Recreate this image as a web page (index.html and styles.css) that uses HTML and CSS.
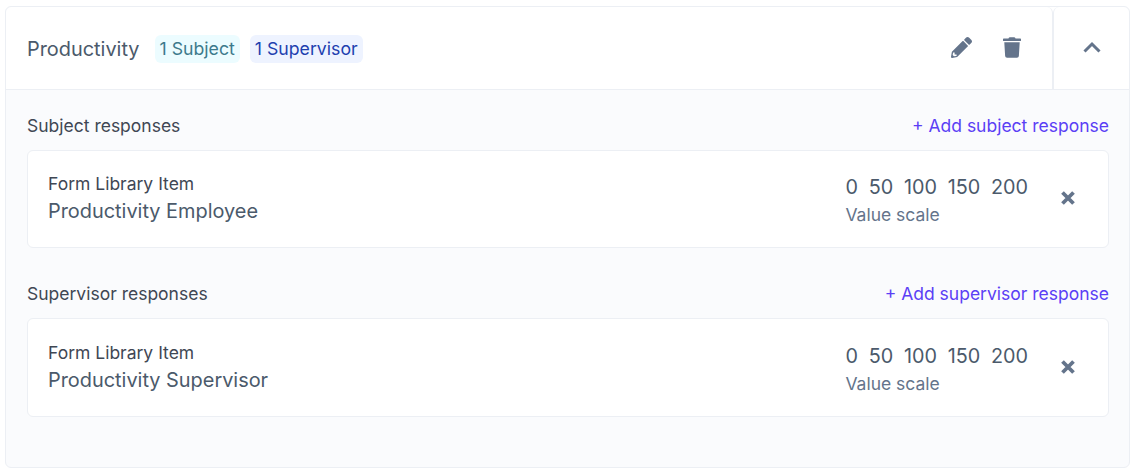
FILE: index.html
```html
<!DOCTYPE html>
<html lang="en">
<head>
    <meta charset="UTF-8">
    <meta name="viewport" content="width=device-width, initial-scale=1.0">
    <title>Productivity</title>
    <link rel="stylesheet" href="styles.css">
</head>
<body>
    <div class="card">
        <div class="card-header">
            <div class="header-main">
                <span class="title">Productivity</span>
                <span class="badge badge-subject">1 Subject</span>
                <span class="badge badge-supervisor">1 Supervisor</span>
                <div class="header-actions">
                    <svg class="icon" width="21" height="21" viewBox="0 0 512 512"><path d="M497.900 142.100l-46.100 46.100c-4.700 4.700-12.300 4.700-17 0l-111-111c-4.700-4.700-4.700-12.300 0-17l46.100-46.100c18.700-18.700 49.100-18.700 67.900 0l60.100 60.100c18.800 18.700 18.800 49.100 0 67.900zM284.200 99.800L21.600 362.400.4 483.900c-2.900 16.400 11.400 30.600 27.800 27.800l121.500-21.300 262.600-262.600c4.700-4.700 4.700-12.300 0-17l-111-111c-4.800-4.700-12.400-4.700-17.100 0zM88 424h48v36.300l-64.500 11.300-31.100-31.100L51.700 376H88v48z"/></svg>
                    <svg class="icon" width="18" height="21" viewBox="0 0 448 512"><path d="M432 32H312l-9.400-18.700A24 24 0 0 0 281.100 0H166.800a23.720 23.720 0 0 0-21.400 13.300L136 32H16A16 16 0 0 0 0 48v32a16 16 0 0 0 16 16h416a16 16 0 0 0 16-16V48a16 16 0 0 0-16-16zM53.200 467a48 48 0 0 0 47.900 45h245.800a48 48 0 0 0 47.900-45L416 128H32z"/></svg>
                </div>
            </div>
            <div class="header-toggle">
                <svg class="icon" width="20" height="20" viewBox="0 0 20 20"><path d="M2.500 13.500L10 6l7.500 7.500" fill="none" stroke="#64748b" stroke-width="3"/></svg>
            </div>
        </div>
        <div class="card-body">
            <div class="section">
                <div class="section-head">
                    <span class="section-title">Subject responses</span>
                    <a class="add-link">+ Add subject response</a>
                </div>
                <div class="item">
                    <div class="item-info">
                        <div class="item-label">Form Library Item</div>
                        <div class="item-name">Productivity Employee</div>
                    </div>
                    <div class="item-scale">
                        <div class="scale-values"><span>0</span><span>50</span><span>100</span><span>150</span><span>200</span></div>
                        <div class="scale-label">Value scale</div>
                    </div>
                    <svg class="icon remove" width="16" height="16" viewBox="0 0 16 16"><path d="M2.500 2.500l11 11M13.500 2.500l-11 11" fill="none" stroke="#64748b" stroke-width="3.800"/></svg>
                </div>
            </div>
            <div class="section">
                <div class="section-head">
                    <span class="section-title">Supervisor responses</span>
                    <a class="add-link">+ Add supervisor response</a>
                </div>
                <div class="item">
                    <div class="item-info">
                        <div class="item-label">Form Library Item</div>
                        <div class="item-name">Productivity Supervisor</div>
                    </div>
                    <div class="item-scale">
                        <div class="scale-values"><span>0</span><span>50</span><span>100</span><span>150</span><span>200</span></div>
                        <div class="scale-label">Value scale</div>
                    </div>
                    <svg class="icon remove" width="16" height="16" viewBox="0 0 16 16"><path d="M2.500 2.500l11 11M13.500 2.500l-11 11" fill="none" stroke="#64748b" stroke-width="3.800"/></svg>
                </div>
            </div>
        </div>
    </div>
</body>
</html>
```

FILE: styles.css
```css
body {
    font-family: Inter, "Liberation Sans", sans-serif;
    background-color: #ffffff;
    margin: 0;
    padding: 6px 17px 8px 5px;
    color: #334155;
}
.card {
    border: 1px solid #eceff4;
    border-radius: 6px;
    background-color: #fafbfd;
}
.card-header {
    display: flex;
    height: 82px;
    background-color: #ffffff;
    border-bottom: 1px solid #eceff4;
    border-radius: 6px 6px 0 0;
}
.header-main {
    flex: 1;
    display: flex;
    align-items: center;
    padding: 1px 0 0 21px;
    border-right: 1px solid #eceff4;
    border-radius: 0 6px 0 0;
}
.header-toggle {
    width: 76px;
    display: flex;
    align-items: center;
    justify-content: center;
    border-left: 1px solid #eceff4;
    box-sizing: border-box;
    border-radius: 6px 6px 0 0;
}
.title {
    font-size: 19.9px;
    color: #4b5a6b;
    margin-right: 15px;
}
.badge {
    font-size: 17.7px;
    line-height: 28px;
    padding: 0 5px;
    border-radius: 6px;
    margin-right: 10px;
}
.badge-subject {
    background-color: #ecfcff;
    color: #3d7a8c;
}
.badge-supervisor {
    background-color: #eef3ff;
    color: #1e40af;
}
.header-actions {
    margin-left: auto;
    margin-bottom: 3px;
    display: flex;
    align-items: center;
    gap: 31px;
    padding-right: 31px;
}
.icon {
    display: block;
    fill: #64748b;
}
.card-body {
    padding: 24px 20px 50px 21px;
}
.section {
    margin-bottom: 34px;
}
.section:last-child {
    margin-bottom: 0;
}
.section:last-child .item {
    height: 97px;
}
.section-head {
    display: flex;
    justify-content: space-between;
    align-items: center;
    height: 22px;
    margin-bottom: 14px;
}
.section-title {
    font-size: 17.5px;
    color: #3f4754;
}
.add-link {
    font-size: 17.5px;
    color: #5b3ff5;
}
.item {
    display: flex;
    align-items: center;
    height: 96px;
    padding: 0 32px 0 20px;
    background-color: #ffffff;
    border: 1px solid #eceff4;
    border-radius: 6px;
}
.item-info {
    flex: 1;
}
.item-label {
    font-size: 17.5px;
    line-height: 24px;
    color: #3f4754;
}
.item-name {
    font-size: 19.9px;
    line-height: 30px;
    color: #4b5a6b;
}
.item-scale {
    margin-right: 32px;
    padding-top: 2px;
}
.scale-values {
    display: flex;
    gap: 10.75px;
    font-size: 19.8px;
    line-height: 30px;
    color: #4b5a6b;
}
.scale-label {
    font-size: 17.5px;
    line-height: 26px;
    color: #64748b;
}
.remove {
    margin-bottom: 2px;
}
```
